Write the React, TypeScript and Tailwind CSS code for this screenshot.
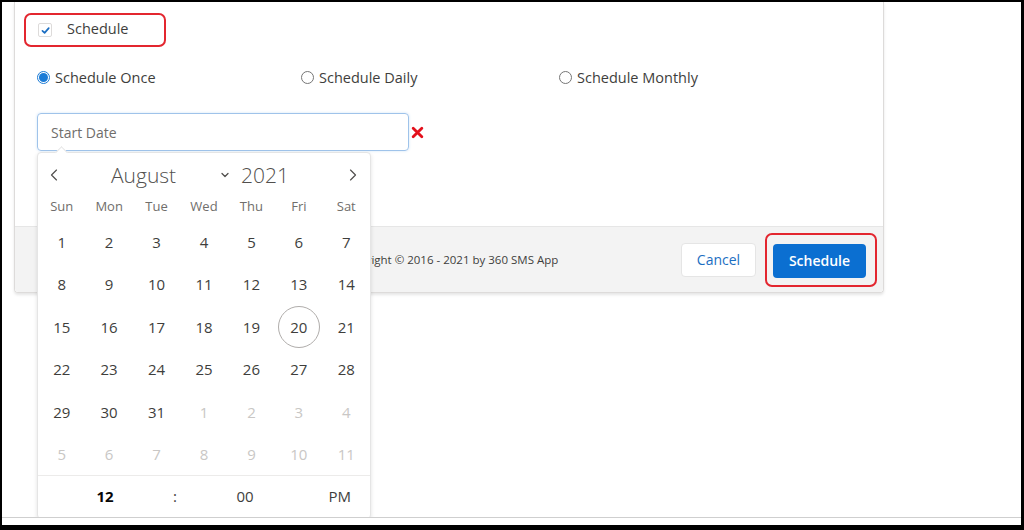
import { ChevronDown, ChevronLeft, ChevronRight } from "lucide-react";

const weekdays = ["Sun", "Mon", "Tue", "Wed", "Thu", "Fri", "Sat"];

type Day = { n: number; muted?: boolean; today?: boolean };

function buildWeeks(): Day[][] {
  const days: Day[] = [];
  for (let i = 1; i <= 31; i++) days.push({ n: i, today: i === 20 });
  for (let i = 1; i <= 11; i++) days.push({ n: i, muted: true });
  const weeks: Day[][] = [];
  for (let w = 0; w < 6; w++) weeks.push(days.slice(w * 7, w * 7 + 7));
  return weeks;
}

function Radio({ checked, label }: { checked?: boolean; label: string }) {
  return (
    <label className="flex items-center gap-[5px] text-[14.5px] text-[#3e3e3c]">
      {checked ? (
        <span className="flex h-[13px] w-[13px] items-center justify-center rounded-full border border-[#1b7bd6] bg-white">
          <span className="h-[9px] w-[9px] rounded-full bg-[#1b7bd6]" />
        </span>
      ) : (
        <span className="h-[13px] w-[13px] rounded-full border border-[#767676] bg-white" />
      )}
      {label}
    </label>
  );
}

function DatePicker() {
  const weeks = buildWeeks();
  return (
    <div className="absolute left-[35px] top-[150px] w-[334px] h-[367px] rounded-[4px] border border-[#e5e5e5] bg-white shadow-[0_2px_4px_rgba(0,0,0,0.12)]">
      {/* nub pointing at the input */}
      <span className="absolute -top-[5px] left-[19px] h-[9px] w-[9px] rotate-45 border-l border-t border-[#e5e5e5] bg-white" />

      <div className="flex h-[44px] items-center pl-[6px] pr-[7px] text-[#514f4d]">
        <ChevronLeft className="h-[20px] w-[20px]" strokeWidth={1.4} />
        <span className="ml-[47px] w-[100px] text-[21px] font-light leading-none">August</span>
        <ChevronDown className="ml-[8px] h-[12px] w-[12px]" strokeWidth={2.6} />
        <span className="ml-[10px] text-[21px] font-light leading-none">2021</span>
        <ChevronRight className="ml-auto h-[20px] w-[20px]" strokeWidth={1.4} />
      </div>

      <div className="grid h-[24px] grid-cols-7 items-start text-center text-[13px] font-medium text-[#706e6b]">
        {weekdays.map((d) => (
          <span key={d}>{d}</span>
        ))}
      </div>

      <div className="flex flex-col">
        {weeks.map((week, wi) => (
          <div key={wi} className="grid h-[42.4px] grid-cols-7 items-center text-center text-[15px]">
            {week.map((d, di) => (
              <div key={di} className="flex justify-center">
                <span
                  className={
                    d.today
                      ? "flex h-[42px] w-[42px] items-center justify-center rounded-full border border-[#b0adab] text-[#3e3e3c]"
                      : d.muted
                        ? "text-[#c9c7c5]"
                        : "text-[#3e3e3c]"
                  }
                >
                  {d.n}
                </span>
              </div>
            ))}
          </div>
        ))}
      </div>

      <div className="flex h-[41px] items-center border-t border-[#ecebea] text-[15px] text-[#3e3e3c]">
        <span className="ml-[32px] w-[70px] text-center font-bold text-[#080707]">12</span>
        <span className="w-[70px] text-center">:</span>
        <span className="w-[70px] text-center">00</span>
        <span className="flex-1 pr-[19px] text-right">PM</span>
      </div>
    </div>
  );
}

export default function App() {
  return (
    <div
      className="h-[530px] w-[1024px] overflow-hidden bg-black pb-[5px] pl-[2px] pr-[3px] pt-[2px]"
      style={{ fontFamily: "'Open Sans', 'Liberation Sans', sans-serif" }}
    >
      <div className="flex h-full flex-col bg-white">
        <div className="relative h-[516px] overflow-hidden border-b border-[#cfcfcf]">
          {/* card */}
          <div className="ml-[12px] w-[870px] rounded-b-[4px] border-x border-b border-[#dddbda] shadow-[0_2px_3px_rgba(0,0,0,0.1)]">
            <div className="h-[224px] bg-white pl-[22px] pt-[11px]">
              <div className="-ml-[13px] flex h-[34px] w-[142px] items-center gap-[15px] rounded-[7px] border-2 border-[#e3262f] pb-[2px] pl-[12px]">
                <span className="mt-[2px] flex h-[14px] w-[14px] items-center justify-center rounded-[2px] border border-[#dddbda] bg-white">
                  <svg viewBox="0 0 10 10" className="h-[9px] w-[9px]">
                    <path d="M1.6 5.4 L4 7.6 L8.6 2.4" fill="none" stroke="#1b6ec2" strokeWidth="1.9" strokeLinecap="round" strokeLinejoin="round" />
                  </svg>
                </span>
                <span className="text-[14.5px] text-[#3e3e3c]">Schedule</span>
              </div>

              <div className="mt-[20px] grid h-[20px] w-[800px] grid-cols-[264px_258px_1fr] items-center">
                <Radio checked label="Schedule Once" />
                <Radio label="Schedule Daily" />
                <Radio label="Schedule Monthly" />
              </div>

              <div className="mt-[26px] flex items-center">
                <div className="flex h-[38px] w-[372px] items-center rounded-[4px] border border-[#9fc3ea] pl-[13px] text-[14px] text-[#706e6b] shadow-[0_0_3px_#d2e4f7]">
                  Start Date
                </div>
                <svg viewBox="0 0 12 12" className="ml-[2px] h-[13px] w-[13px]">
                  <path d="M2 2 L10 10 M10 2 L2 10" stroke="#e3101b" strokeWidth="2.6" strokeLinecap="round" />
                </svg>
              </div>
            </div>

            <div className="grid h-[66px] grid-cols-[1fr_auto_1fr] items-center rounded-b-[4px] border-t border-[#e6e6e6] bg-[#f3f3f3]">
              <span />
              <span className="text-[11.5px] text-[#3e3e3c]">Copyright © 2016 - 2021 by 360 SMS App</span>
              <div className="flex items-center justify-end pr-[6px]">
                <button className="h-[34px] w-[75px] rounded-[4px] border border-[#e5e5e5] bg-white text-[14px] text-[#1b6ec2]">
                  Cancel
                </button>
                <div className="ml-[9px] rounded-[7px] border-2 border-[#e3262f] pb-[7px] pl-[6px] pr-[9px] pt-[9px]">
                  <button className="h-[34px] w-[93px] rounded-[4px] bg-[#0b6fd1] text-[14px] font-semibold text-white">
                    Schedule
                  </button>
                </div>
              </div>
            </div>
          </div>

          <DatePicker />
        </div>
      </div>
    </div>
  );
}
